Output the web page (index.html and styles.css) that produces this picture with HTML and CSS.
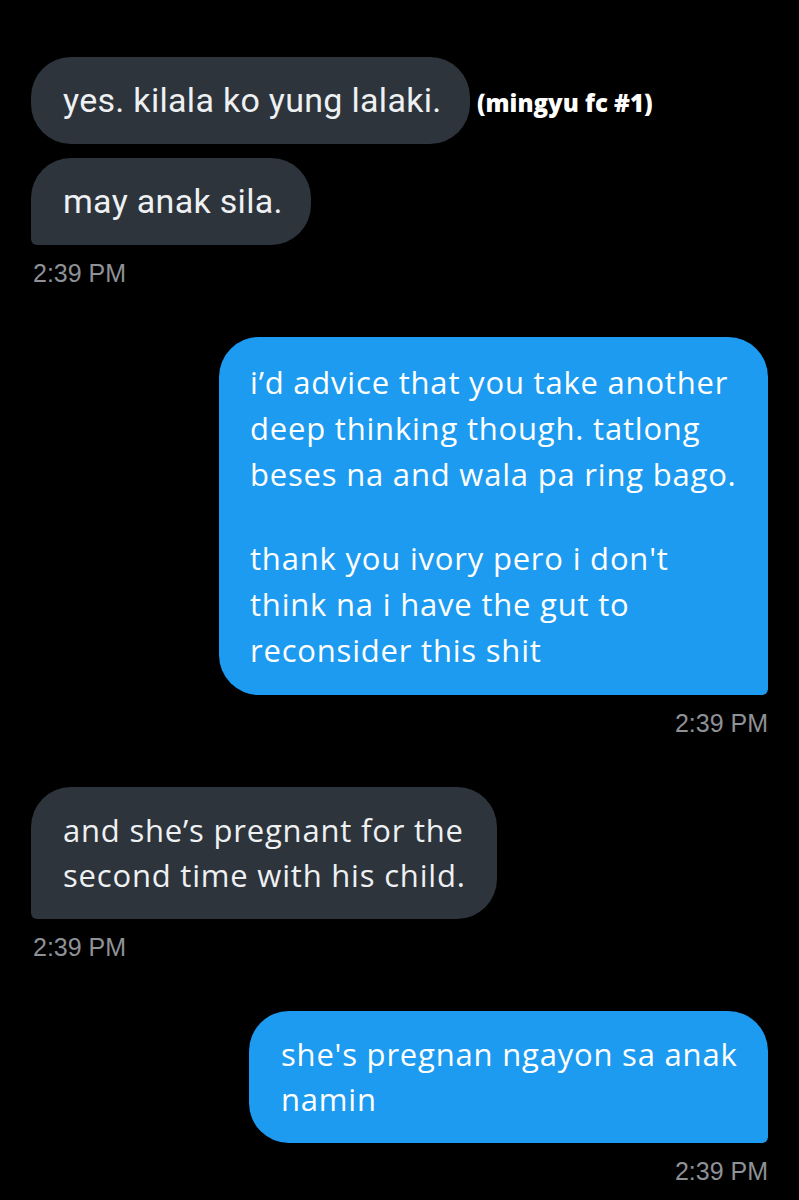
FILE: index.html
```html
<!DOCTYPE html>
<html>
<head>
<meta charset="utf-8">
<link rel="stylesheet" href="styles.css">
</head>
<body>
<div class="chat">
  <div class="row first">
    <div class="bubble in w1 roboto">yes. kilala ko yung lalaki.</div>
    <span class="tag">(mingyu fc #1)</span>
  </div>
  <div class="bubble in w2 roboto sq-bl next">may anak sila.</div>
  <div class="time">2:39 PM</div>

  <div class="bubble out w3 gap">
    <p>i’d advice that you take another<br>deep thinking though. tatlong<br>beses na and wala pa ring bago.</p>
    <p class="para">thank you ivory pero i don't<br>think na i have the gut to<br>reconsider this shit</p>
  </div>
  <div class="time right">2:39 PM</div>

  <div class="bubble in w4 sq-bl gap">and she’s pregnant for the<br>second time with his child.</div>
  <div class="time">2:39 PM</div>

  <div class="bubble out w5 gap">she's pregnan ngayon sa anak<br>namin</div>
  <div class="time right">2:39 PM</div>
</div>
</body>
</html>
```

FILE: styles.css
```css
html, body {
  margin: 0;
  padding: 0;
  background: #000;
}
.chat {
  padding: 57px 31px 0 31px;
  display: flex;
  flex-direction: column;
  font-family: "Open Sans", "Noto Sans", sans-serif;
}
.row {
  display: flex;
  align-items: center;
  gap: 8px;
}
.bubble {
  box-sizing: border-box;
  border-radius: 40px;
  font-size: 31px;
  letter-spacing: 0.8px;
  line-height: 45px;
  padding: 21px 32px;
  color: #eef0f2;
  white-space: nowrap;
}
.bubble p {
  margin: 0;
}
.bubble .para {
  margin-top: 38px;
}
.in {
  background: #2d343c;
  align-self: flex-start;
}
.out {
  background: #1d9bf0;
  color: #fff;
  align-self: flex-end;
  border-bottom-right-radius: 6px;
  line-height: 46px;
  padding: 22px 31px;
}
.sq-bl {
  border-bottom-left-radius: 6px;
}
.roboto {
  font-family: Roboto, "Liberation Sans", sans-serif;
  font-size: 34px;
  letter-spacing: 0.3px;
}
.w1 { width: 439px; }
.w2 { width: 280px; }
.w3 { width: 549px; }
.w4 { width: 466px; }
.w5 { width: 519px; padding: 21px 32px; line-height: 45px; }
.next { margin-top: 14px; }
.gap { margin-top: 49px; }
.tag {
  color: #fff;
  font-weight: 800;
  font-size: 24px;
  font-family: "Open Sans", sans-serif;
  margin-left: -1px;
  position: relative;
  top: 2px;
}
.time {
  margin-top: 13px;
  line-height: 30px;
  font-family: "Liberation Sans", Arial, sans-serif;
  font-size: 25px;
  color: #8e9195;
  padding-left: 2px;
}
.time.right {
  align-self: flex-end;
  padding-left: 0;
}
```
